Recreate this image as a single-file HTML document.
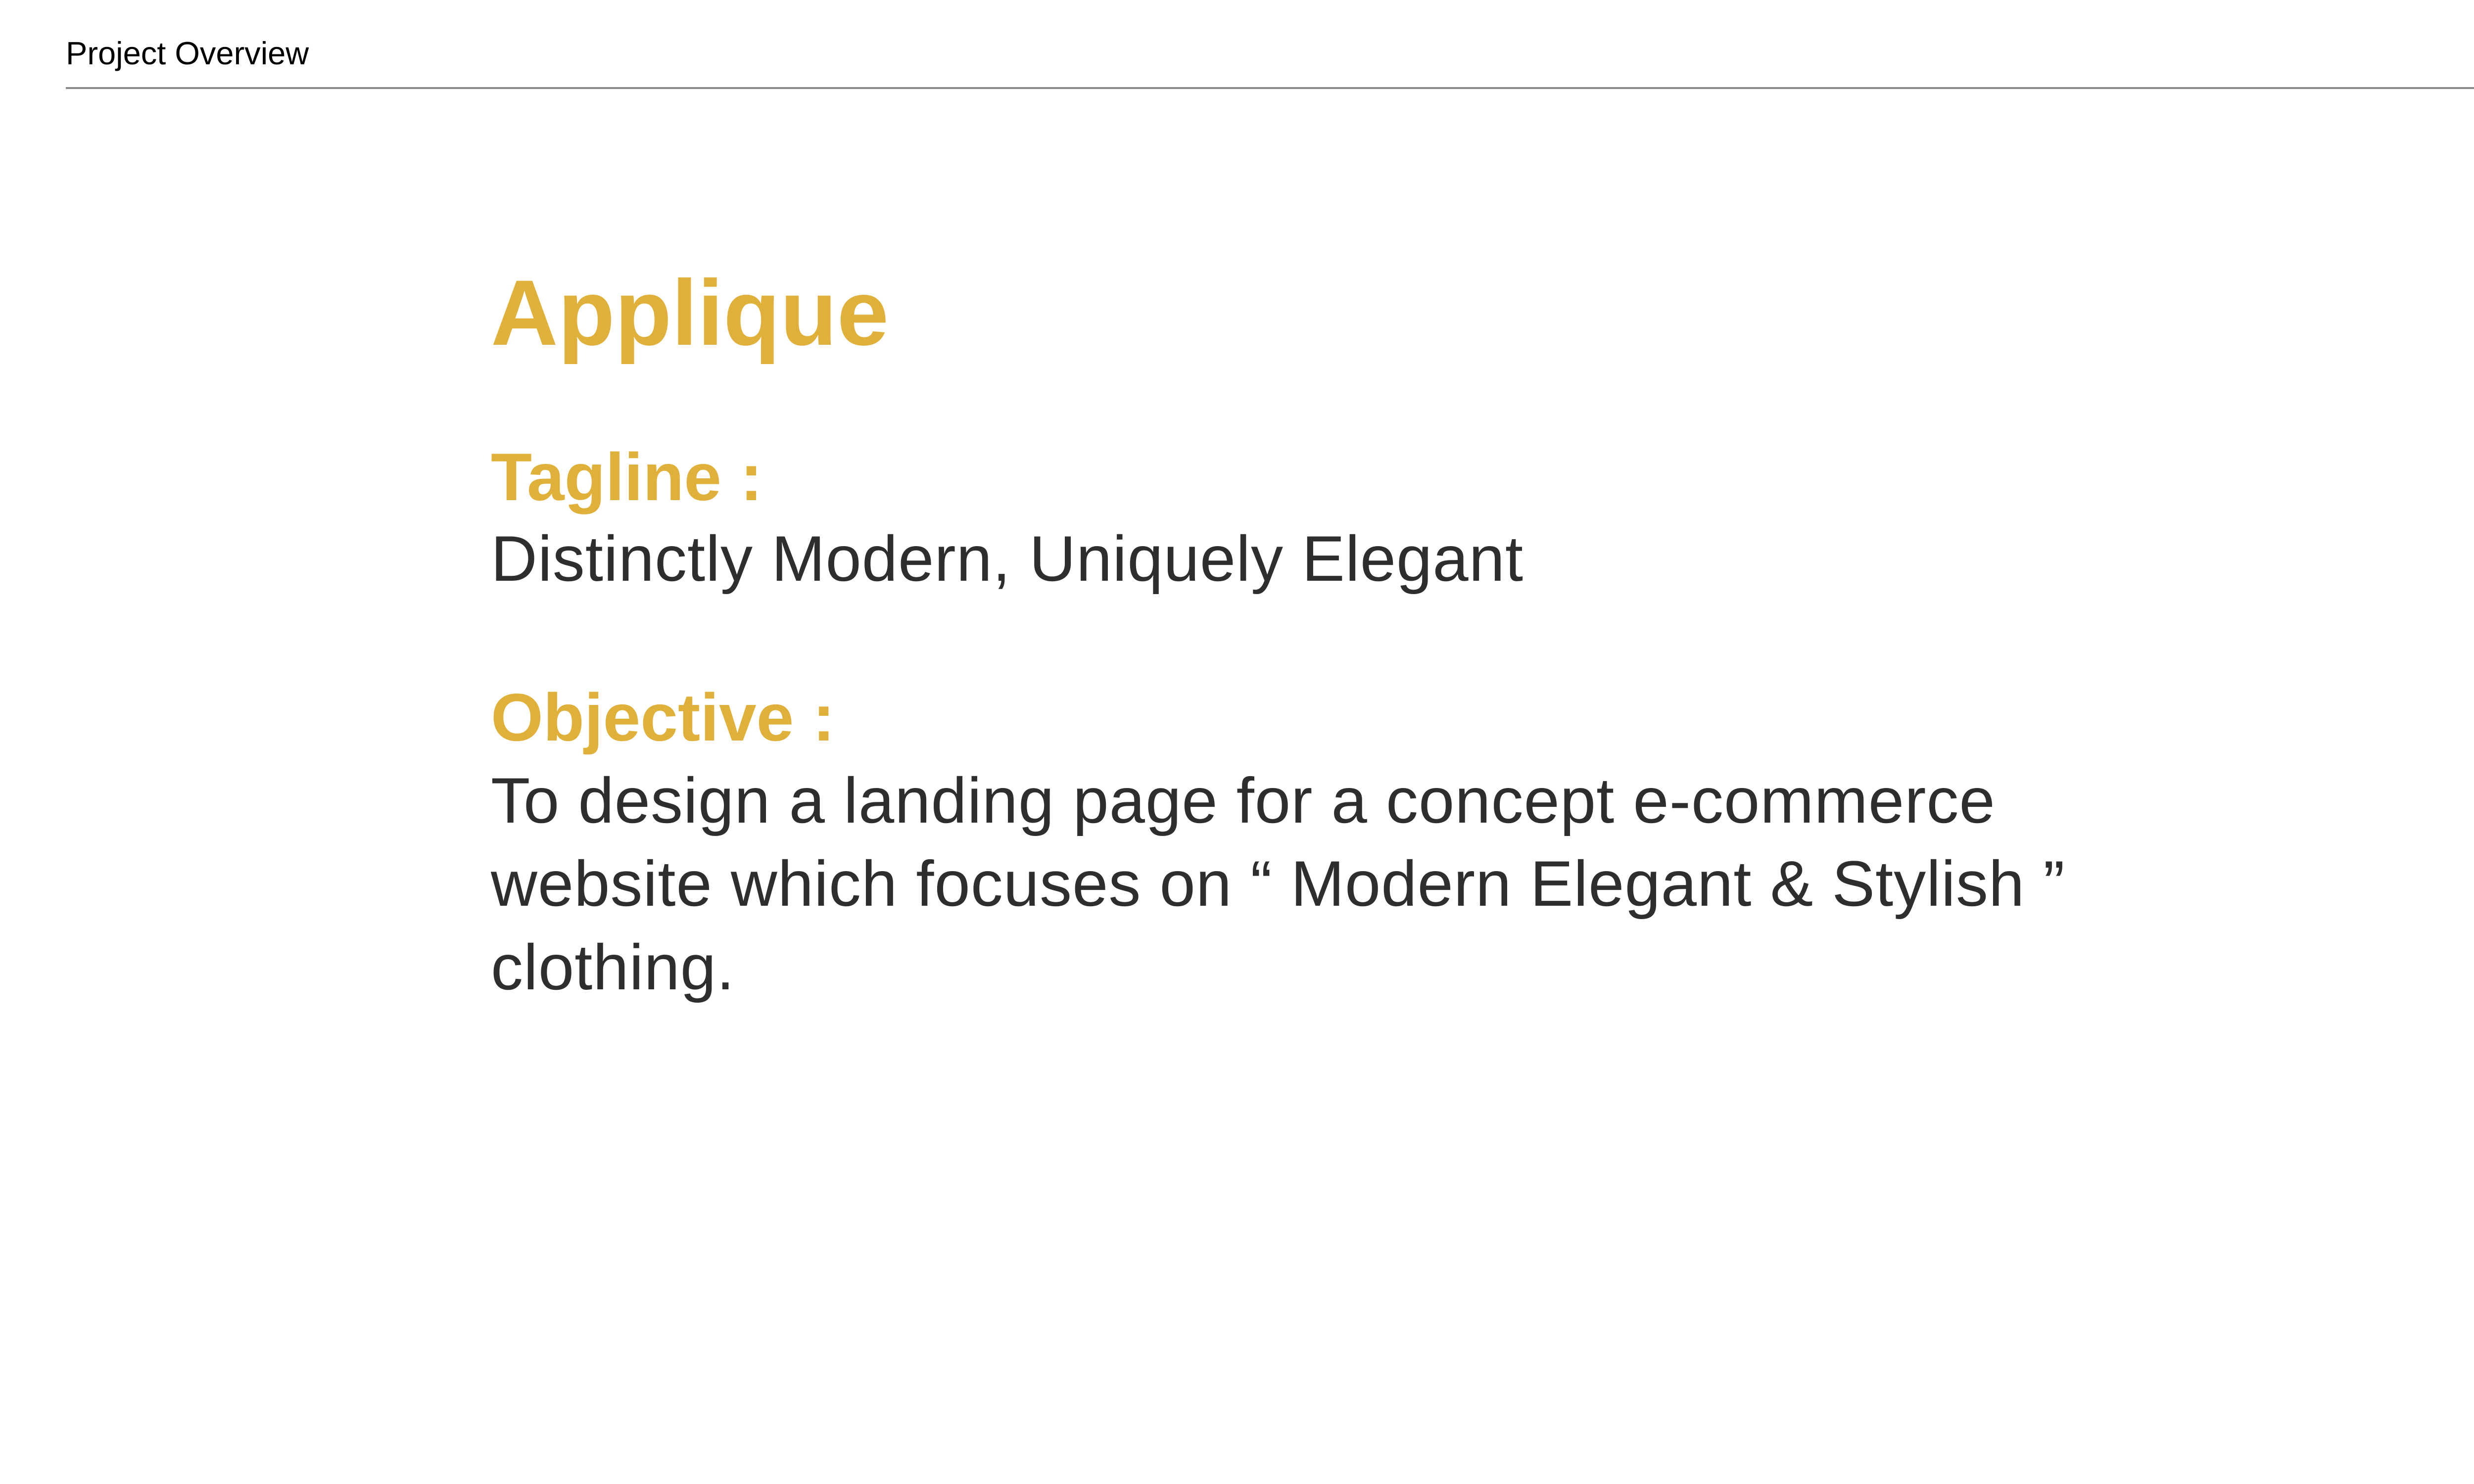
<!DOCTYPE html>
<html><head><meta charset="utf-8"><style>
html,body{margin:0;padding:0;background:#fff;}
body{width:5334px;height:3000px;position:relative;overflow:hidden;font-family:"Liberation Sans",sans-serif;}
.t{position:absolute;line-height:1;white-space:nowrap;margin:0;}
.y{color:#DFB13A;font-weight:bold;}
.b{color:#2e2e2e;font-size:130px;left:992px;letter-spacing:1px;}
</style></head><body>
<div class="t" style="left:133px;top:75px;font-size:65px;color:#000;">Project Overview</div>
<div style="position:absolute;left:133px;top:176px;width:5091px;height:4px;background:#8a8a8a;"></div>
<div class="t y" style="left:992px;top:538px;font-size:188px;">Applique</div>
<div class="t y" style="left:992px;top:896px;font-size:136px;">Tagline :</div>
<div class="t b" style="top:1064px;">Distinctly Modern, Uniquely Elegant</div>
<div class="t y" style="left:992px;top:1382px;font-size:136px;">Objective :</div>
<div class="t b" style="top:1553px;">To design a landing page for a concept e-commerce</div>
<div class="t b" style="top:1721px;">website which focuses on “ Modern Elegant &amp; Stylish ”</div>
<div class="t b" style="top:1890px;">clothing.</div>
<div class="t" style="right:110px;top:2767px;font-size:157px;font-weight:bold;color:#808080;letter-spacing:8px;">04</div>
</body></html>
